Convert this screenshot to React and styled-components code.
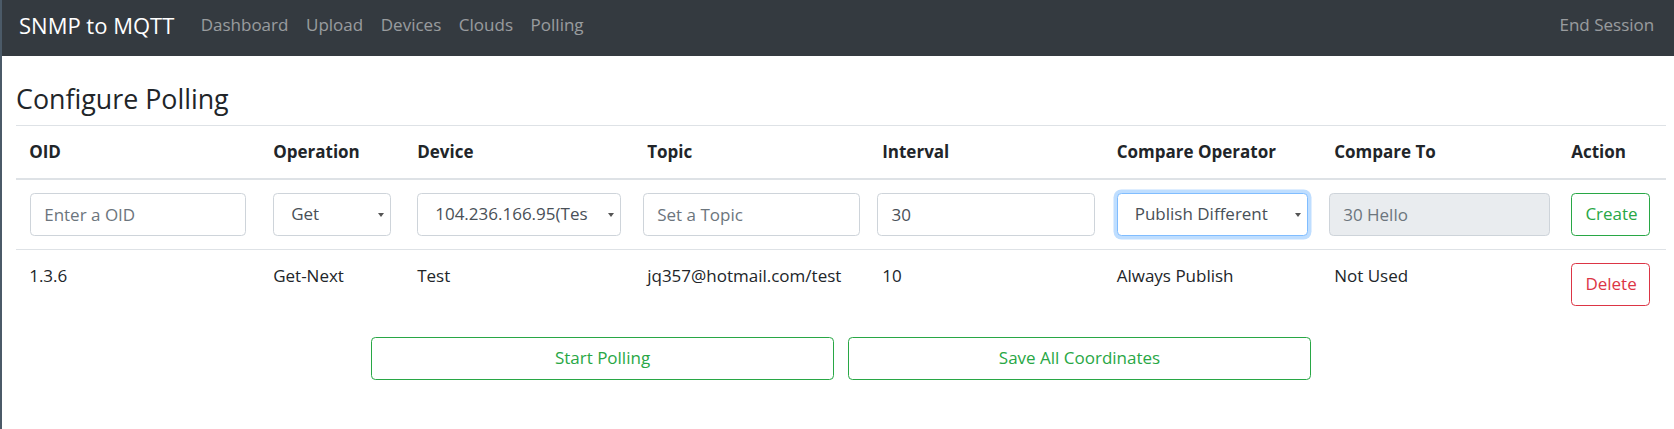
import React from 'react';
import styled, { createGlobalStyle } from 'styled-components';

const GlobalStyle = createGlobalStyle`
  html, body {
    margin: 0;
    padding: 0;
    background: #fff;
  }

  body {
    font-family: "Open Sans", "Noto Sans", Arial, sans-serif;
    font-size: 17px;
    line-height: 26.4px;
    color: #212529;
  }

  * {
    box-sizing: border-box;
  }
`;

const Frame = styled.div`
  min-height: 429px;
  border-left: 2px solid #4b5a68;
`;

const Navbar = styled.nav`
  height: 56px;
  display: flex;
  align-items: center;
  padding: 0 11px 6px 17px;
  background-color: #343a40;
`;

const Brand = styled.a`
  font-size: 22px;
  color: #fff;
  text-decoration: none;
  margin-right: 17.6px;
  white-space: nowrap;
`;

const NavLinks = styled.div`
  display: flex;
  align-items: center;
  flex: 1;
`;

const NavLink = styled.a`
  padding: 0 8.8px;
  font-size: 17px;
  color: rgba(255, 255, 255, 0.5);
  text-decoration: none;
  white-space: nowrap;
  margin-left: ${(p) => (p.$right ? 'auto' : '0')};
`;

const Main = styled.main`
  padding: 0 8px 0 14px;
`;

const Title = styled.h3`
  margin: 24px 0 7.5px 0;
  font-size: 26.8px;
  font-weight: 500;
  line-height: 37px;
`;

const Table = styled.table`
  width: 100%;
  border-collapse: collapse;
  table-layout: fixed;
`;

const Col = styled.col`
  width: ${(p) => p.$w}px;
`;

const Th = styled.th`
  padding: 13.2px;
  text-align: left;
  vertical-align: bottom;
  font-weight: 700;
  white-space: nowrap;
  border-top: 1px solid #dee2e6;
  border-bottom: 2px solid #dee2e6;
`;

const Td = styled.td`
  padding: 13.2px;
  vertical-align: top;
  white-space: nowrap;
  border-top: 1px solid #dee2e6;
`;

const Field = styled.div`
  display: flex;
  justify-content: center;
`;

const TextInput = styled.input`
  flex: none;
  width: ${(p) => p.$w}px;
  height: 42.4px;
  padding: 0 13.2px;
  font: inherit;
  color: #495057;
  background-color: ${(p) => (p.disabled ? '#e9ecef' : '#fff')};
  border: 1px solid #ced4da;
  border-radius: 4.4px;
  outline: none;

  &::placeholder {
    color: #6c757d;
    opacity: 1;
  }
`;

const SelectBox = styled.div`
  position: relative;
  width: 100%;
`;

const Select = styled.select`
  display: block;
  width: 100%;
  height: 42.4px;
  padding: 0 32px 0 17px;
  font: inherit;
  color: #495057;
  background-color: #fff;
  border: 1px solid ${(p) => (p.$focus ? '#80bdff' : '#ced4da')};
  border-radius: 4.4px;
  box-shadow: ${(p) => (p.$focus ? '0 0 0 3.5px rgba(0, 123, 255, 0.25)' : 'none')};
  appearance: none;
  -webkit-appearance: none;
  outline: none;
  text-overflow: clip;
`;

const Caret = styled.svg`
  position: absolute;
  right: 7px;
  top: 50%;
  width: 6px;
  height: 4px;
  margin-top: -2px;
  pointer-events: none;
`;

const OutlineButton = styled.button`
  height: 42.4px;
  padding: 0 13.2px;
  font: inherit;
  color: ${(p) => p.$color};
  background: transparent;
  border: 1px solid ${(p) => p.$color};
  border-radius: 4.4px;
  width: ${(p) => (p.$w ? `${p.$w}px` : 'auto')};
  cursor: pointer;
`;

const ButtonRow = styled.div`
  display: flex;
  justify-content: center;
  gap: 14px;
  margin-top: 18.5px;
`;

const GREEN = '#28a745';
const RED = '#dc3545';

const columns = [
  { name: 'OID', w: 244 },
  { name: 'Operation', w: 144 },
  { name: 'Device', w: 230 },
  { name: 'Topic', w: 235 },
  { name: 'Interval', w: 234.5 },
  { name: 'Compare Operator', w: 217.5 },
  { name: 'Compare To', w: 237 },
  { name: 'Action', w: 108 },
];

const polls = [
  {
    oid: '1.3.6',
    operation: 'Get-Next',
    device: 'Test',
    topic: 'jq357@hotmail.com/test',
    interval: '10',
    compare: 'Always Publish',
    compareTo: 'Not Used',
  },
];

function DropDown({ value, options, focus }) {
  return (
    <SelectBox>
      <Select defaultValue={value} $focus={focus}>
        {options.map((o) => (
          <option key={o}>{o}</option>
        ))}
      </Select>
      <Caret viewBox="0 0 6 4">
        <path d="M0 0 H6 L3 4 Z" fill="#555" />
      </Caret>
    </SelectBox>
  );
}

export default function App() {
  return (
    <>
      <GlobalStyle />
      <Frame>
        <Navbar>
          <Brand href="#">SNMP to MQTT</Brand>
          <NavLinks>
            <NavLink href="#">Dashboard</NavLink>
            <NavLink href="#">Upload</NavLink>
            <NavLink href="#">Devices</NavLink>
            <NavLink href="#">Clouds</NavLink>
            <NavLink href="#">Polling</NavLink>
            <NavLink href="#" $right>End Session</NavLink>
          </NavLinks>
        </Navbar>

        <Main>
          <Title>Configure Polling</Title>
          <Table>
            <colgroup>
              {columns.map((c) => (
                <Col key={c.name} $w={c.w} />
              ))}
            </colgroup>
            <thead>
              <tr>
                {columns.map((c) => (
                  <Th key={c.name}>{c.name}</Th>
                ))}
              </tr>
            </thead>
            <tbody>
              <tr>
                <Td>
                  <Field>
                    <TextInput $w={216} placeholder="Enter a OID" />
                  </Field>
                </Td>
                <Td>
                  <DropDown value="Get" options={['Get', 'Get-Next', 'Walk']} />
                </Td>
                <Td>
                  <DropDown value="104.236.166.95(Test)" options={['104.236.166.95(Test)']} />
                </Td>
                <Td>
                  <Field>
                    <TextInput $w={217} placeholder="Set a Topic" />
                  </Field>
                </Td>
                <Td>
                  <Field>
                    <TextInput $w={218} defaultValue="30" />
                  </Field>
                </Td>
                <Td>
                  <DropDown
                    value="Publish Different"
                    options={['Always Publish', 'Publish Different', 'Greater Than', 'Less Than']}
                    focus
                  />
                </Td>
                <Td>
                  <Field>
                    <TextInput $w={221} placeholder="30 Hello" disabled />
                  </Field>
                </Td>
                <Td>
                  <OutlineButton $color={GREEN} $w={79}>Create</OutlineButton>
                </Td>
              </tr>
              {polls.map((p) => (
                <tr key={p.oid + p.topic}>
                  <Td>{p.oid}</Td>
                  <Td>{p.operation}</Td>
                  <Td>{p.device}</Td>
                  <Td>{p.topic}</Td>
                  <Td>{p.interval}</Td>
                  <Td>{p.compare}</Td>
                  <Td>{p.compareTo}</Td>
                  <Td>
                    <OutlineButton $color={RED} $w={79}>Delete</OutlineButton>
                  </Td>
                </tr>
              ))}
            </tbody>
          </Table>

          <ButtonRow>
            <OutlineButton $color={GREEN} $w={463}>Start Polling</OutlineButton>
            <OutlineButton $color={GREEN} $w={463}>Save All Coordinates</OutlineButton>
          </ButtonRow>
        </Main>
      </Frame>
    </>
  );
}
